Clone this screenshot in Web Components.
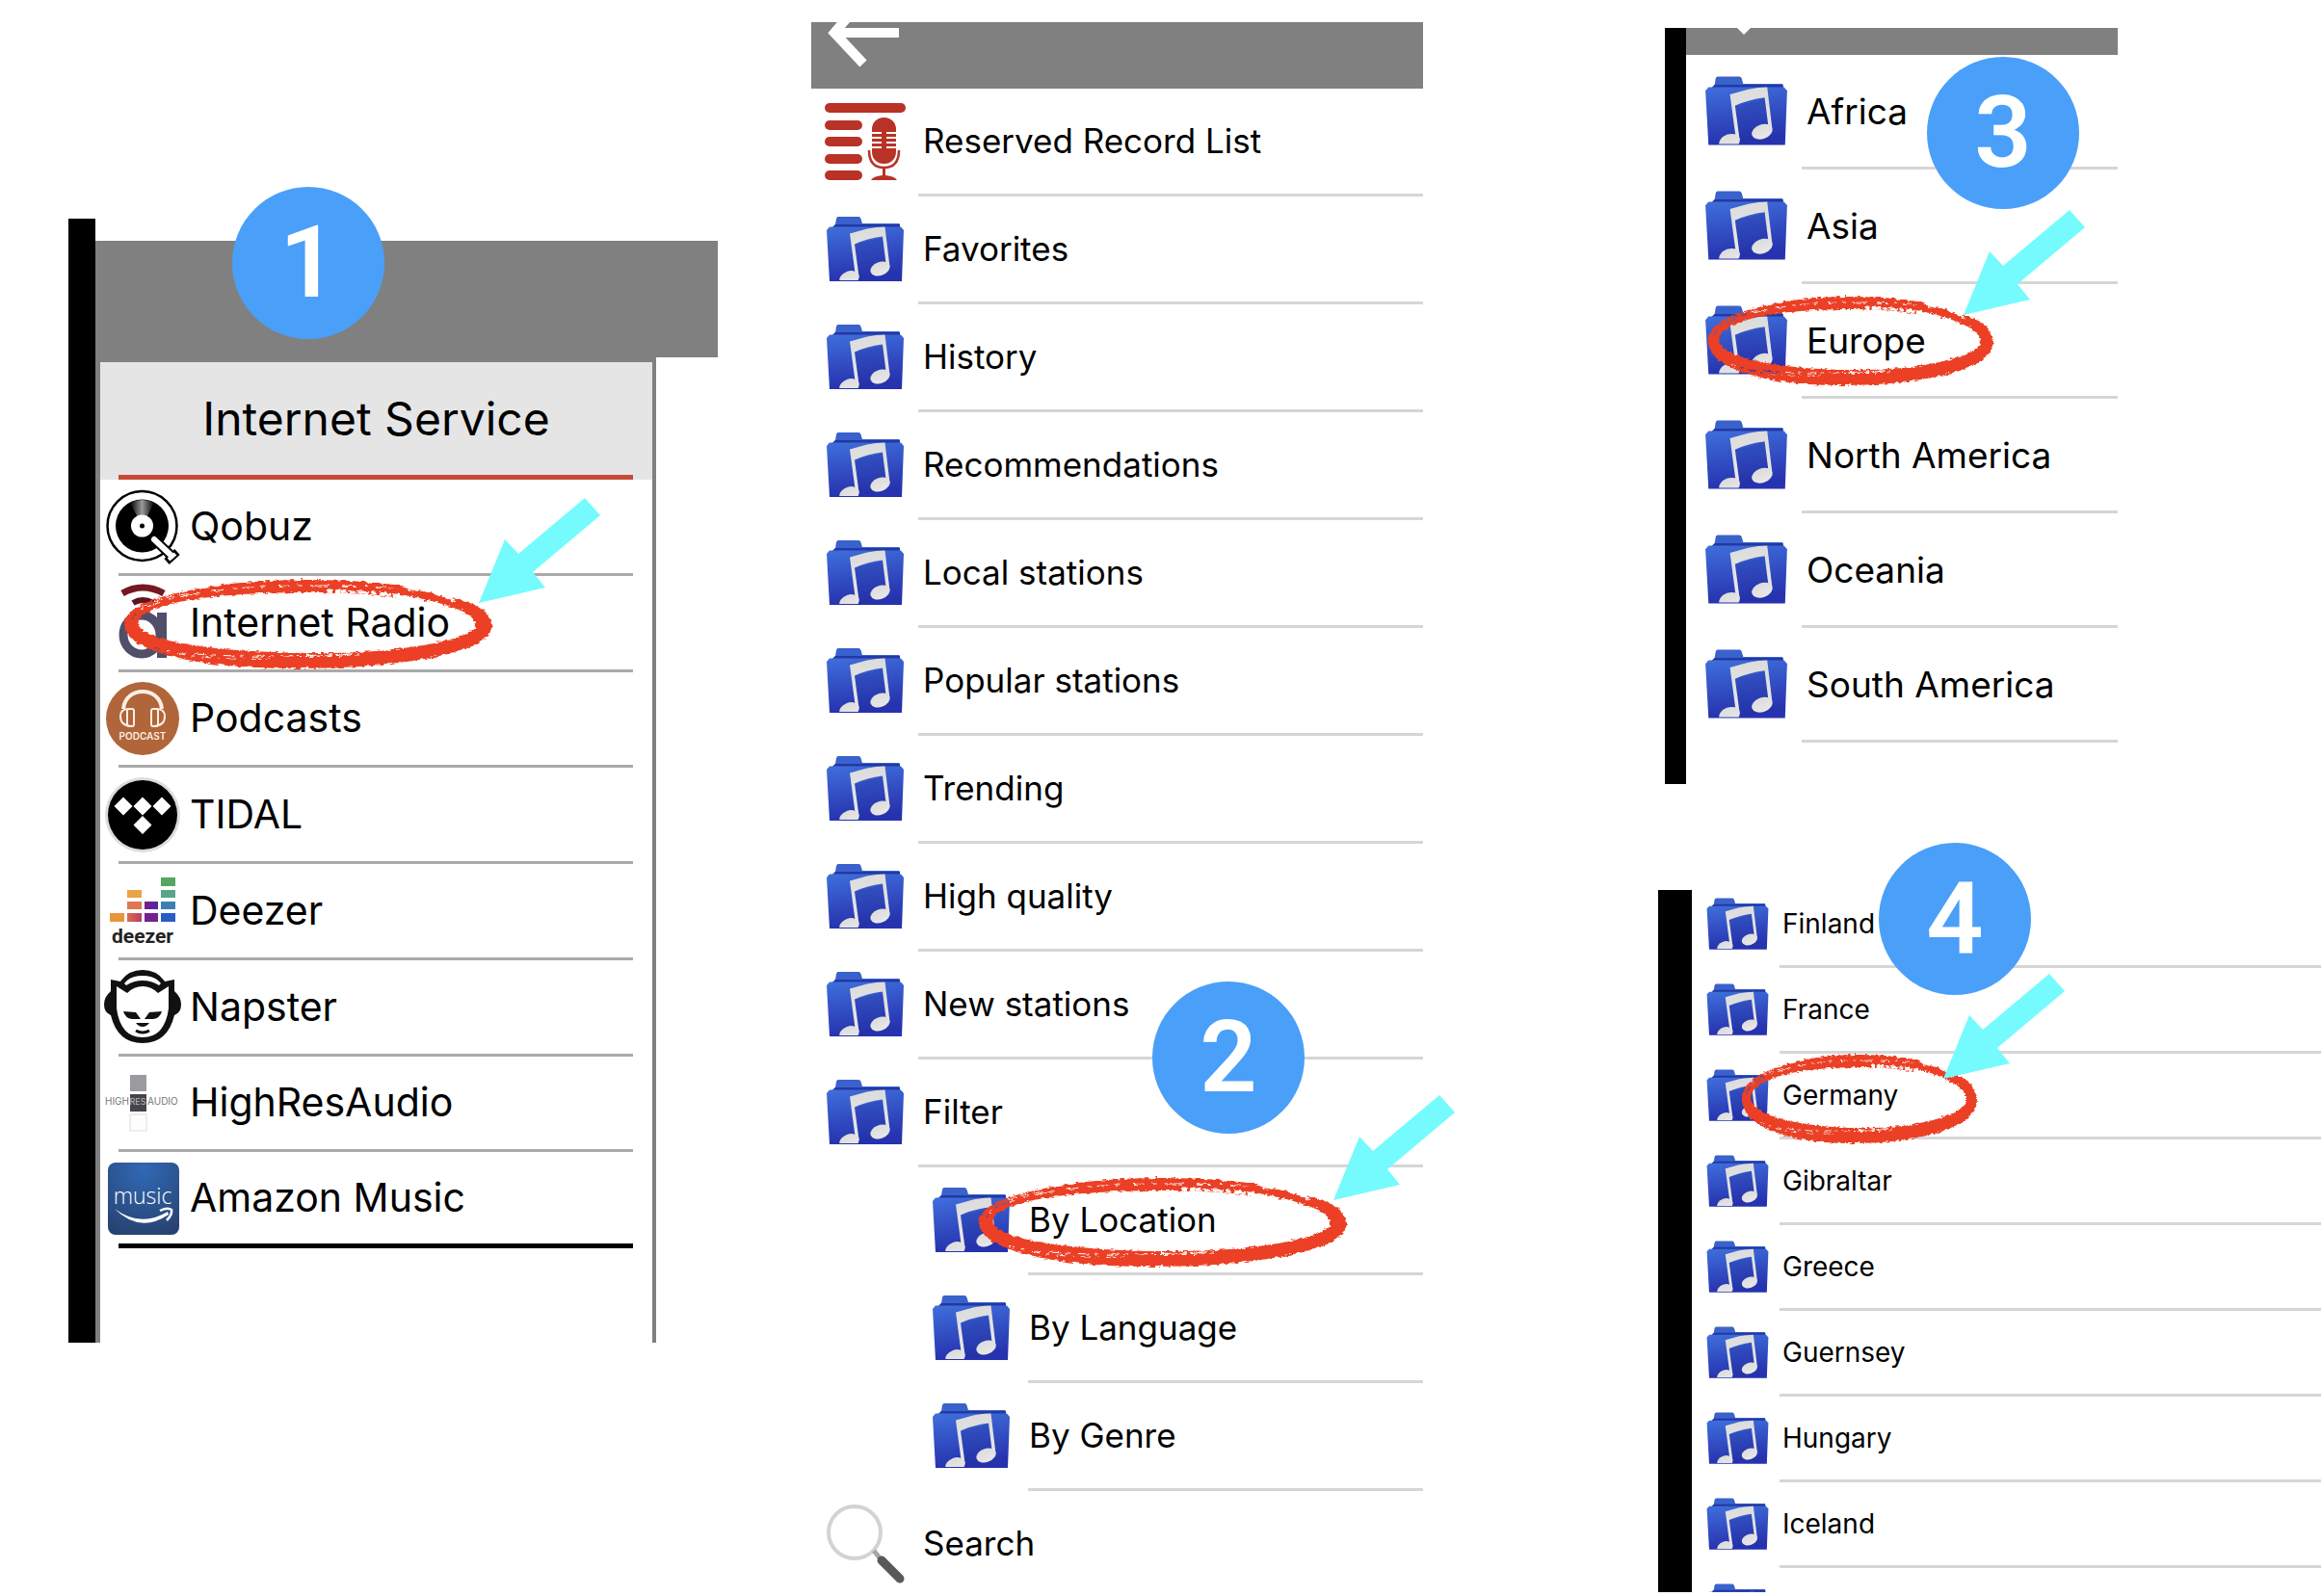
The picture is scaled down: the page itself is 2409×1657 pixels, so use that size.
<!DOCTYPE html>
<html lang="en">
<head>
<meta charset="utf-8">
<meta name="viewport" content="width=device-width, initial-scale=1">
<title>Internet radio guide</title>
<style>
  html, body { margin: 0; }
  body {
    background: #fff;
    color: #000;
    font-family: Inter, "Liberation Sans", sans-serif;
  }
</style>
</head>
<body>
<guide-page></guide-page>

<script>
const ICONS = {
  folder: `<svg viewBox="0 0 84 84">
    <defs>
      <linearGradient id="front" x1="0" y1="0" x2="0.2" y2="1">
        <stop offset="0" stop-color="#3f6fdc"/><stop offset="0.5" stop-color="#3350c4"/><stop offset="1" stop-color="#2632ae"/>
      </linearGradient>
      <linearGradient id="note" x1="0" y1="0" x2="0" y2="1">
        <stop offset="0" stop-color="#dcdcdc"/><stop offset="1" stop-color="#e8e8ea"/>
      </linearGradient>
      <clipPath id="clip"><path d="M0 0H80V66H0Z"/></clipPath>
    </defs>
    <g transform="translate(2 8)">
      <path d="M5 12L9 8 10 2Q10.500 0 12 0H33Q35 0 35.500 2L37 7H75Q76 7 76 9V14H5Z" fill="#3a62cc"/>
      <path d="M6 11L9 8H76V12H6Z" fill="#2338a4"/>
      <path d="M0 14L3 10.500H77L80 14 78 67H3Z" fill="url(#front)"/>
      <path d="M28 29L60 21 64 50 48 62 34 66Z" fill="#1f2f9c" opacity=".25"/>
      <g fill="url(#note)" clip-path="url(#clip)">
        <path d="M24 17.500L42 12.500Q52 10.500 60.500 10.500L65.500 52 62 52 58 20.500Q42 22.500 29 28.500L33.500 62 30 62Z"/>
        <ellipse cx="55.500" cy="54" rx="10.500" ry="7" transform="rotate(-20 55.500 54)"/>
        <ellipse cx="23.500" cy="64" rx="10.500" ry="7.500" transform="rotate(-20 23.500 64)"/>
      </g>
    </g></svg>`,
  record: `<svg viewBox="0 0 84 84" fill="#b93226">
    <rect x="0" y="2" width="84" height="10" rx="5"/>
    <rect x="0" y="20" width="39" height="10" rx="5"/>
    <rect x="0" y="37" width="39" height="10" rx="5"/>
    <rect x="0" y="55" width="39" height="10" rx="5"/>
    <rect x="0" y="72" width="39" height="10" rx="5"/>
    <rect x="49" y="17" width="25" height="48" rx="12"/>
    <path d="M49 33H59M64 33H74M49 38H59M64 38H74M49 43H59M64 43H74M49 48H59M64 48H74" stroke="#fff" stroke-width="2"/>
    <path d="M46 51Q46 69 61.500 69T77 51" fill="none" stroke="#b93226" stroke-width="2.500"/>
    <path d="M60 69H63V77Q73 78 75 82H48Q50 78 60 77Z"/></svg>`,
  search: `<svg viewBox="0 0 84 84" fill="none">
    <circle cx="31" cy="31" r="27" stroke="#d2d3d4" stroke-width="4"/>
    <path d="M51 50L59 60" stroke="#a5a6a7" stroke-width="5"/>
    <path d="M59 60L78 79" stroke="#58595a" stroke-width="9" stroke-linecap="round"/></svg>`,
  qobuz: `<svg viewBox="0 0 80 80">
    <defs><linearGradient id="shine" x1="0" y1="0" x2="1" y2="0">
      <stop offset="0" stop-color="#000"/><stop offset=".5" stop-color="#999"/><stop offset="1" stop-color="#000"/>
    </linearGradient></defs>
    <circle cx="39.500" cy="40" r="36" fill="#fff" stroke="#000" stroke-width="2.500"/>
    <circle cx="39.500" cy="40" r="27.500" fill="#000"/>
    <path d="M39.500 40L27 16Q39.500 10 52 16Z" fill="url(#shine)"/>
    <circle cx="39.500" cy="40" r="11.500" fill="#fff"/>
    <circle cx="39.500" cy="40" r="2.500"/>
    <path d="M52 54L70 71" stroke="#000" stroke-width="10"/>
    <path d="M65 77L76 67" stroke="#000" stroke-width="8"/>
    <path d="M52 54L70 71" stroke="#fff" stroke-width="6" stroke-linecap="round"/>
    <path d="M67 75L74 69" stroke="#fff" stroke-width="4"/></svg>`,
  airable: `<svg viewBox="0 0 80 80" fill="none">
    <path d="M19 10Q40-2 62 10" stroke="#741823" stroke-width="7"/>
    <path d="M30 20Q40 14 51 20" stroke="#5c1620" stroke-width="6"/>
    <ellipse cx="39" cy="53" rx="19" ry="20" stroke="#514e69" stroke-width="9"/>
    <path d="M60 30V77" stroke="#514e69" stroke-width="10"/></svg>`,
  podcast: `<svg viewBox="0 0 80 80">
    <circle cx="40" cy="40" r="38" fill="#b0663a"/>
    <g fill="none" stroke="#fbeee2" stroke-width="2">
      <path d="M20 30C22 6 58 6 60 30" stroke-width="4"/>
      <path d="M28 30Q17 29 17 38T28 48M52 30Q63 29 63 38T52 48"/>
      <rect x="24" y="30" width="7" height="18" rx="2"/>
      <rect x="49" y="30" width="7" height="18" rx="2"/>
    </g>
    <text x="40" y="62" text-anchor="middle" font-family="Inter, sans-serif" font-size="10" font-weight="600" fill="#fbeee2">PODCAST</text></svg>`,
  tidal: `<svg viewBox="0 0 80 80">
    <circle cx="40" cy="40" r="39" fill="#dcdcdc"/>
    <circle cx="40" cy="40" r="36" fill="#000"/>
    <path d="M20 21.500L29.500 31 20 40.500 10.500 31ZM40 21.500L49.500 31 40 40.500 30.500 31ZM60 21.500L69.500 31 60 40.500 50.500 31ZM40 41L49.500 50.500 40 60 30.500 50.500Z" fill="#fff"/></svg>`,
  deezer: `<svg viewBox="0 0 80 80">
    <defs>
      <linearGradient id="b"><stop stop-color="#db6b4d"/><stop offset="1" stop-color="#b93c66"/></linearGradient>
      <linearGradient id="c"><stop stop-color="#7c1b86"/><stop offset="1" stop-color="#4a2aa8"/></linearGradient>
    </defs>
    <rect x="6" y="43" width="15" height="9" fill="#e8963c"/>
    <rect x="24" y="19" width="15" height="8" fill="#e6a548"/>
    <rect x="24" y="31" width="15" height="8" fill="#df7850"/>
    <rect x="24" y="43" width="15" height="9" fill="url(#b)"/>
    <rect x="42" y="31" width="14" height="8" fill="url(#c)"/>
    <rect x="42" y="43" width="14" height="9" fill="#75208f"/>
    <rect x="59" y="6" width="15" height="9" fill="#55a563"/>
    <rect x="59" y="19" width="15" height="8" fill="#58a58c"/>
    <rect x="59" y="31" width="15" height="8" fill="#3d80b4"/>
    <rect x="59" y="43" width="15" height="9" fill="#2a5cc4"/>
    <text x="40" y="74" text-anchor="middle" font-family="Roboto, sans-serif" font-size="21" font-weight="700" fill="#222">deezer</text></svg>`,
  napster: `<svg viewBox="0 0 80 80">
    <path d="M7 12L17 14Q25 2 40 2T63 14L73 12V24Q80 30 80 38T73 49Q66 78 40 78T7 49Q0 46 0 38T7 24Z" fill="#111"/>
    <path d="M21 16Q27 8 40 8T59 16L57 18Q49 13 40 13T23 18Z" fill="#fff"/>
    <path d="M13 19L24 26Q31 19 40 19T56 26L67 19V42Q63 72 40 72T13 42Z" fill="#fff"/>
    <path d="M20 45L33 46 38 53H29Q22 52 20 45ZM60 45L47 46 42 53H51Q58 52 60 45ZM33 57H47Q44 61 40 61T33 57Z" fill="#111"/>
    <path d="M33 65Q40 69 47 65" fill="none" stroke="#111" stroke-width="3"/></svg>`,
  highres: `<svg viewBox="0 0 80 80" overflow="visible" font-family="Inter, sans-serif" font-size="10" fill="#777">
    <rect x="27" y="11" width="17" height="17" fill="#9b9b9f"/>
    <rect x="27" y="31" width="17" height="18" fill="#45454b"/>
    <rect x="27" y="52" width="17" height="17" fill="#fdfdfd" stroke="#dedede"/>
    <text x="26" y="42" text-anchor="end">HIGH</text>
    <text x="35" y="42" text-anchor="middle" font-size="9" fill="#bbb">RES</text>
    <text x="45" y="42">AUDIO</text></svg>`,
  amazon: `<svg viewBox="0 0 80 80">
    <defs><radialGradient id="blue" cx=".5" cy=".1" r="1">
      <stop stop-color="#3069b5"/><stop offset="1" stop-color="#27406c"/>
    </radialGradient></defs>
    <rect x="4" y="3" width="74" height="75" rx="8" fill="url(#blue)"/>
    <text x="40" y="46" text-anchor="middle" font-family="Open Sans, sans-serif" font-size="23" font-weight="300" fill="#fff">music</text>
    <path d="M11 51Q38 71 66 54L67 57Q37 77 11 51Z" fill="#fff"/>
    <path d="M58 53Q66 49 70 52 71 57 65 63" fill="none" stroke="#fff" stroke-width="2.500"/></svg>`
};

class MenuIcon extends HTMLElement {
  connectedCallback() {
    this.attachShadow({ mode: 'open' }).innerHTML = `
      <style>
        :host { display: block; flex: none; width: var(--icon-size); height: var(--icon-size); }
        svg { display: block; width: 100%; height: 100%; }
      </style>
      ${ICONS[this.getAttribute('name')] || ''}
    `;
  }
}
customElements.define('menu-icon', MenuIcon);

// One line of a menu. Sizes come from the custom properties of the list around it.
class MenuRow extends HTMLElement {
  connectedCallback() {
    const icon = this.getAttribute('icon') || 'folder';
    this.attachShadow({ mode: 'open' }).innerHTML = `
      <style>
        :host {
          display: flex;
          flex-direction: column;
          position: relative;
          box-sizing: border-box;
          min-height: var(--row-height);
        }
        a {
          flex: 1;
          display: flex;
          align-items: center;
          gap: var(--label-gap);
          padding-left: var(--row-start);
          color: inherit;
          text-decoration: none;
          font-size: var(--row-font);
          line-height: 1;
          white-space: nowrap;
        }
        hr {
          width: auto;
          height: 3px;
          margin: 0 var(--rule-end, 0px) 0 var(--rule-start);
          border: 0;
          background: var(--rule-color, #d6d6d6);
        }
        :host([nested]) a { padding-left: calc(var(--row-start) + 110px); }
        :host([nested]) hr { margin-left: calc(var(--rule-start) + 114px); }
        :host([last]) hr { height: 5px; background: #000; }
        :host([plain]) { min-height: 108px; }
        :host([plain]) hr { display: none; }
      </style>
      <a href="#"><menu-icon name="${icon}"></menu-icon><span><slot></slot></span></a>
      <hr>
      <slot name="mark"></slot>
    `;
  }
}
customElements.define('menu-row', MenuRow);

// Brush-drawn oval laid over a row; it stretches to the width it is given.
class BrushRing extends HTMLElement {
  connectedCallback() {
    this.attachShadow({ mode: 'open' }).innerHTML = `
      <style>
        :host { display: block; position: absolute; z-index: 1; height: 92px; pointer-events: none; }
        svg { display: block; width: 100%; height: 100%; overflow: visible; }
      </style>
      <svg viewBox="0 0 382 92" preserveAspectRatio="none" fill="none">
        <defs>
          <filter id="rough" x="-5%" y="-10%" width="110%" height="120%">
            <feTurbulence type="fractalNoise" baseFrequency="0.18 0.4" numOctaves="3" seed="4"/>
            <feDisplacementMap in="SourceGraphic" scale="5" xChannelSelector="R" yChannelSelector="G"/>
          </filter>
          <mask id="bristle" maskUnits="userSpaceOnUse" x="-5" y="-5" width="392" height="102">
            <rect x="-5" y="-5" width="392" height="102" fill="#fff"/>
            <g stroke="#000" fill="none">
              <path d="M24 28Q80 6 190 6T300 13" stroke-width="1" stroke-dasharray="14 9 4 7 22 12"/>
              <path d="M8 40Q18 20 70 14" stroke-width="1" stroke-dasharray="10 4"/>
              <path d="M30 70Q70 84 150 82" stroke-width="1" stroke-dasharray="9 6 3 8"/>
              <path d="M60 76Q110 80 160 79T250 78" stroke-width="1" stroke-dasharray="5 8 12 5"/>
              <path d="M180 79Q210 79 240 77" stroke-width="2" stroke-dasharray="3 5 8 4"/>
              <path d="M292 5Q325 10 345 20" stroke-width="7"/>
              <path d="M282 17Q322 23 350 35" stroke-width="5" stroke-dasharray="30 3 16 2"/>
              <path d="M210 12Q250 12 290 17" stroke-width="3" stroke-dasharray="6 3 12 2"/>
            </g>
          </mask>
        </defs>
        <g filter="url(#rough)">
          <path mask="url(#bristle)" fill="#eb4025" fill-rule="evenodd" stroke="#eb4025" stroke-width="2"
            d="M1 46C1 20 90 1 191 1S381 20 381 47 290 91 180 91 1 72 1 46ZM13 45C15 65 100 76 188 77S363 65 366 47 290 12 190 12 15 24 13 45Z"/>
          <path d="M100 8Q200-3 290 9M340 19Q356 26 366 36M90 86Q170 95 240 86" stroke="#eb4025" stroke-width="2" stroke-dasharray="20 4 8 6"/>
        </g>
      </svg>
    `;
  }
}
customElements.define('brush-ring', BrushRing);

class PointerArrow extends HTMLElement {
  connectedCallback() {
    this.attachShadow({ mode: 'open' }).innerHTML = `
      <style>
        :host { display: block; position: absolute; z-index: 1; width: 126px; height: 109px; pointer-events: none; }
        svg { display: block; }
      </style>
      <svg width="126" height="109" viewBox="0 0 126 109" fill="#75fbfd">
        <path d="M110 0L126 18 56 77 69 93 0 109 27 43 41 58Z"/>
      </svg>
    `;
  }
}
customElements.define('pointer-arrow', PointerArrow);

// A numbered step: optional black device edge on the left, the screen beside it.
class GuideStep extends HTMLElement {
  connectedCallback() {
    this.attachShadow({ mode: 'open' }).innerHTML = `
      <style>
        :host { display: flex; position: relative; }
        .edge { flex: none; width: var(--edge, 0px); background: #000; }
        .screen { flex: 1; min-width: 0; }
        .badge {
          position: absolute;
          z-index: 2;
          left: var(--badge-left);
          top: var(--badge-top);
          display: flex;
          align-items: center;
          justify-content: center;
          width: 158px;
          height: 158px;
          border-radius: 50%;
          background: #4a9ff9;
          color: #fff;
          font: 600 104px/1 Roboto, "Liberation Sans", sans-serif;
        }
      </style>
      <div class="edge"></div>
      <div class="screen"><slot></slot></div>
      <div class="badge">${this.getAttribute('number')}</div>
    `;
  }
}
customElements.define('guide-step', GuideStep);

class GuidePage extends HTMLElement {
  connectedCallback() {
    this.attachShadow({ mode: 'open' }).innerHTML = `
      <style>
        :host {
          display: grid;
          grid-template-columns: 71fr 674fr 97fr 635fr 244fr 688fr;
          align-items: start;
          min-height: 100vh;
          overflow: hidden;
        }
        .bar { background: #808080; overflow: hidden; }
        .bar svg { display: block; }

        .services {
          grid-column: 2;
          margin-top: 227px;
          --edge: 28px;
          --badge-left: 170px;
          --badge-top: -33px;
        }
        .services .bar { height: 121px; margin-top: 23px; }
        .drawer {
          margin-right: 64px;
          padding-bottom: 98px;
          border: solid #808080;
          border-width: 5px 4px 0 5px;
          --row-height: 99px;
          --row-font: 41px;
          --row-start: 4px;
          --icon-size: 80px;
          --label-gap: 9px;
          --rule-start: 19px;
          --rule-end: 20px;
          --rule-color: #aaa;
        }
        .drawer header { background: #e5e5e5; }
        h1 {
          margin: 0;
          padding: 32px 0;
          font-size: 48px;
          font-weight: 400;
          line-height: 53px;
          text-align: center;
        }
        .drawer header hr { height: 5px; margin: 0 20px 0 19px; border: 0; background: #c64a38; }
        .drawer nav { display: grid; grid-auto-rows: 1fr; min-height: 798px; }

        .radio {
          grid-column: 4;
          margin-top: 23px;
          --badge-left: 354px;
          --badge-top: 996px;
          --row-height: 112px;
          --row-font: 35px;
          --row-start: 14px;
          --icon-size: 84px;
          --label-gap: 18px;
          --rule-start: 111px;
        }
        .radio .bar { height: 69px; }

        .places { grid-column: 6; }
        .regions {
          margin: 29px 211px 0 7px;
          --edge: 22px;
          --badge-left: 272px;
          --badge-top: 30px;
          --row-height: 119px;
          --row-font: 37px;
          --row-start: 18px;
          --icon-size: 89px;
          --label-gap: 18px;
          --rule-start: 120px;
        }
        .regions .bar { height: 28px; }
        .regions nav { padding-bottom: 43px; }
        .countries {
          margin-top: 110px;
          --edge: 35px;
          --badge-left: 229px;
          --badge-top: -49px;
          --row-height: 89px;
          --row-font: 28px;
          --row-start: 14px;
          --icon-size: 67px;
          --label-gap: 13px;
          --rule-start: 91px;
        }
        /* the list is scrolled: its first and last rows are cut by the screen */
        .countries nav { height: 729px; overflow: hidden; }
        .countries .scroll { margin-top: -8px; }
      </style>

      <guide-step class="services" number="1">
        <div class="bar"></div>
        <section class="drawer">
          <header><h1>Internet Service</h1><hr></header>
          <nav>
            <menu-row icon="qobuz">Qobuz</menu-row>
            <menu-row icon="airable">Internet Radio
              <brush-ring slot="mark" style="left: 25px; top: 4px; width: 382px"></brush-ring>
              <pointer-arrow slot="mark" style="left: 393px; top: -81px"></pointer-arrow>
            </menu-row>
            <menu-row icon="podcast">Podcasts</menu-row>
            <menu-row icon="tidal">TIDAL</menu-row>
            <menu-row icon="deezer">Deezer</menu-row>
            <menu-row icon="napster">Napster</menu-row>
            <menu-row icon="highres">HighResAudio</menu-row>
            <menu-row icon="amazon" last>Amazon Music</menu-row>
          </nav>
        </section>
      </guide-step>

      <guide-step class="radio" number="2">
        <div class="bar">
          <svg width="100" height="69" viewBox="0 0 100 69" fill="none" stroke="#fff" stroke-width="10">
            <path d="M91 11H24M54 -24L24 11 54 43"/>
          </svg>
        </div>
        <nav>
          <menu-row icon="record">Reserved Record List</menu-row>
          <menu-row>Favorites</menu-row>
          <menu-row>History</menu-row>
          <menu-row>Recommendations</menu-row>
          <menu-row>Local stations</menu-row>
          <menu-row>Popular stations</menu-row>
          <menu-row>Trending</menu-row>
          <menu-row>High quality</menu-row>
          <menu-row>New stations</menu-row>
          <menu-row>Filter</menu-row>
          <menu-row nested>By Location
            <brush-ring slot="mark" style="left: 174px; top: 11px; width: 382px"></brush-ring>
            <pointer-arrow slot="mark" style="left: 542px; top: -75px"></pointer-arrow>
          </menu-row>
          <menu-row nested>By Language</menu-row>
          <menu-row nested>By Genre</menu-row>
          <menu-row icon="search" plain>Search</menu-row>
        </nav>
      </guide-step>

      <div class="places">
        <guide-step class="regions" number="3">
          <div class="bar">
            <svg width="100" height="28" viewBox="0 0 100 28" fill="#fff"><path d="M53 0H67L60 7Z"/></svg>
          </div>
          <nav>
            <menu-row>Africa</menu-row>
            <menu-row>Asia</menu-row>
            <menu-row>Europe
              <brush-ring slot="mark" style="left: 23px; top: 13px; width: 296px"></brush-ring>
              <pointer-arrow slot="mark" style="left: 288px; top: -77px"></pointer-arrow>
            </menu-row>
            <menu-row>North America</menu-row>
            <menu-row>Oceania</menu-row>
            <menu-row>South America</menu-row>
          </nav>
        </guide-step>

        <guide-step class="countries" number="4">
          <nav>
            <div class="scroll">
              <menu-row>Finland</menu-row>
              <menu-row>France</menu-row>
              <menu-row>Germany
                <brush-ring slot="mark" style="left: 52px; top: 1px; width: 244px"></brush-ring>
                <pointer-arrow slot="mark" style="left: 261px; top: -83px"></pointer-arrow>
              </menu-row>
              <menu-row>Gibraltar</menu-row>
              <menu-row>Greece</menu-row>
              <menu-row>Guernsey</menu-row>
              <menu-row>Hungary</menu-row>
              <menu-row>Iceland</menu-row>
              <menu-row></menu-row>
            </div>
          </nav>
        </guide-step>
      </div>
    `;
  }
}
customElements.define('guide-page', GuidePage);
</script>
</body>
</html>
